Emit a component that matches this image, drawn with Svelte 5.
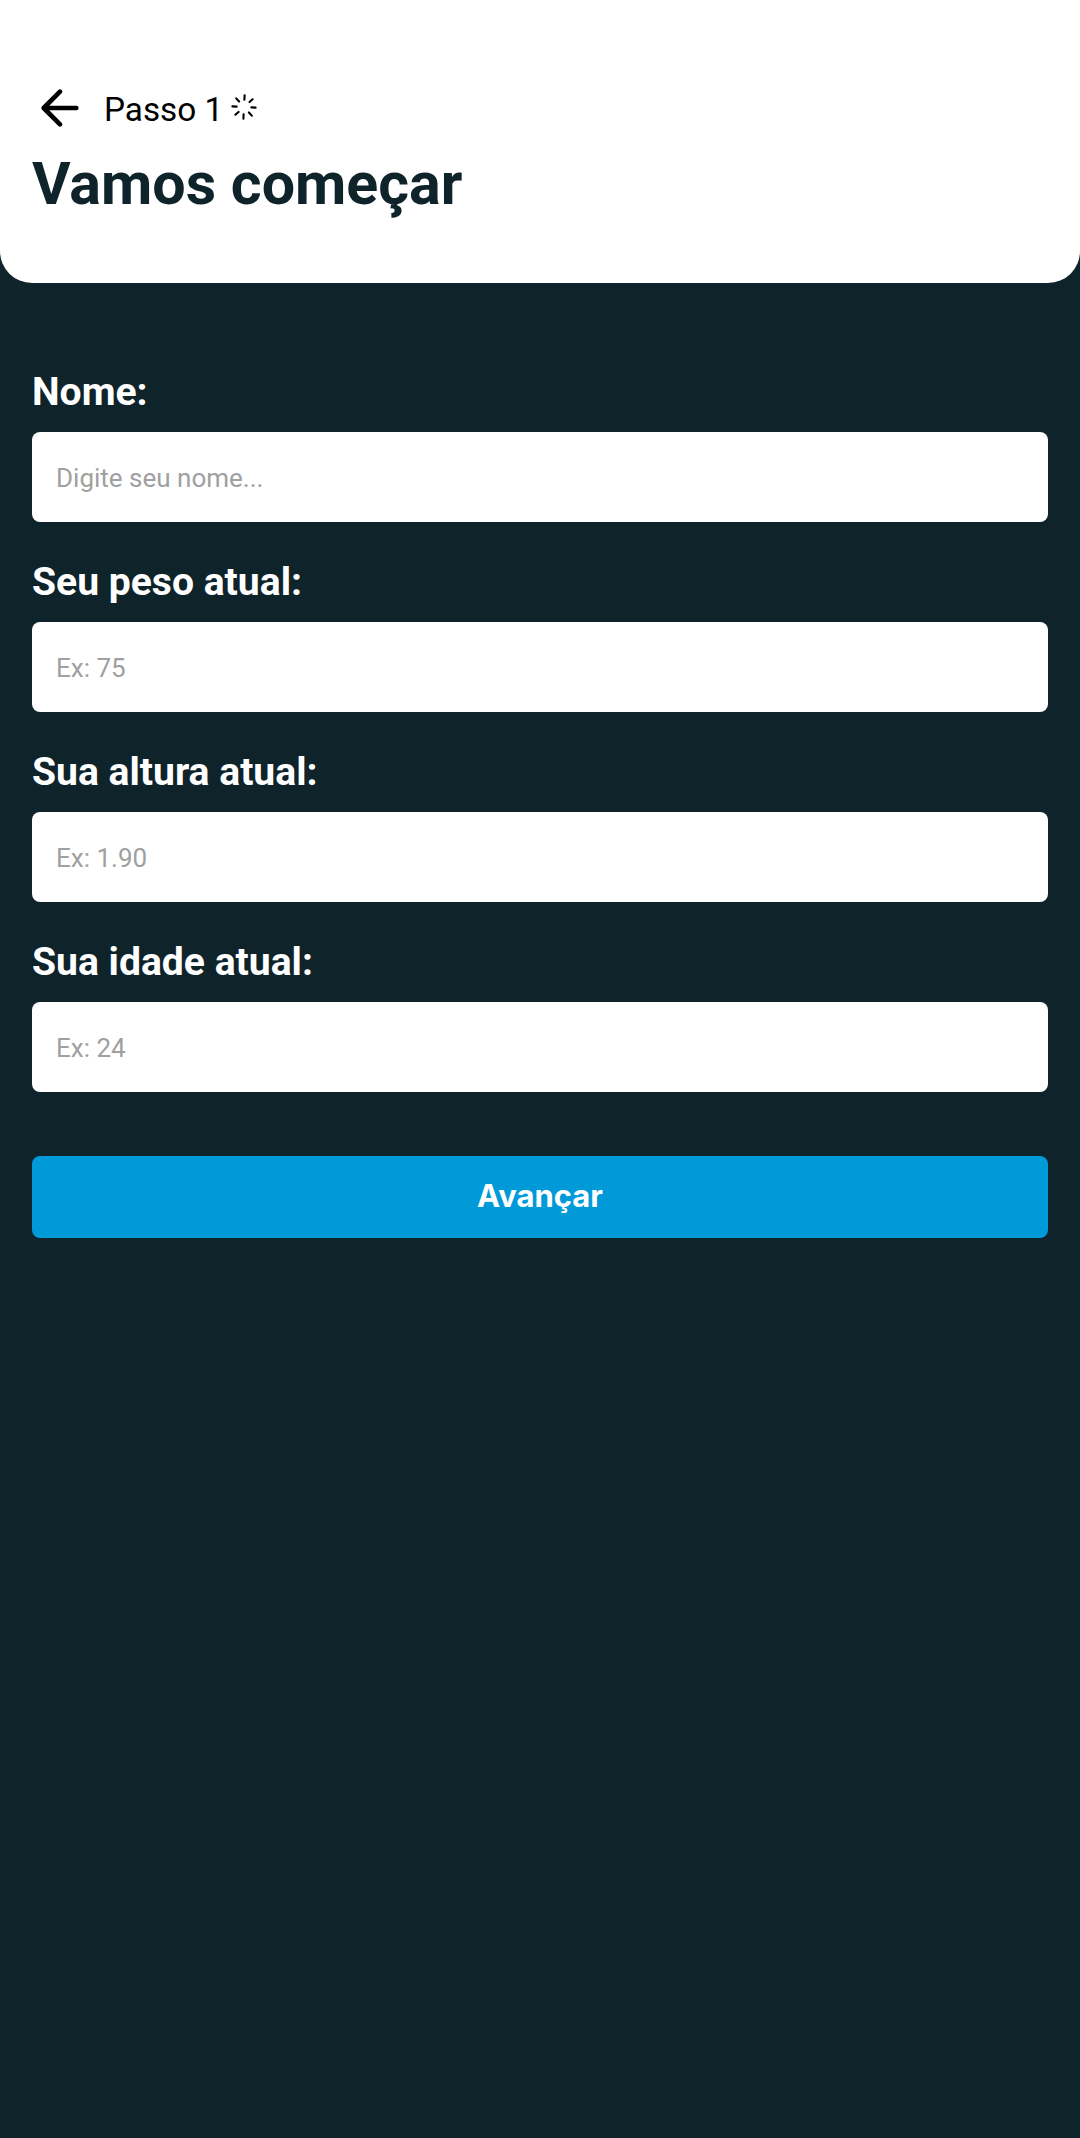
<script>
  const fields = [
    { id: 'nome', label: 'Nome:', placeholder: 'Digite seu nome...' },
    { id: 'peso', label: 'Seu peso atual:', placeholder: 'Ex: 75' },
    { id: 'altura', label: 'Sua altura atual:', placeholder: 'Ex: 1.90' },
    { id: 'idade', label: 'Sua idade atual:', placeholder: 'Ex: 24' }
  ];
</script>

<div class="screen">
  <header>
    <div class="step">
      <button class="back" aria-label="Voltar">
        <svg width="56" height="56" viewBox="0 0 24 24">
          <path d="M19 12H5M12 19l-7-7 7-7" stroke-width="2" />
        </svg>
      </button>
      <span>Passo 1</span>
      <svg class="loader" width="28" height="28" viewBox="0 0 28 28">
        <path
          transform="rotate(3 14 14)"
          d="M14 2.4v4.2M14 21.4v4.2M2.4 14h4.2M21.4 14h4.2M5.8 5.8l3 3M19.2 19.2l3 3M5.8 22.2l3-3M19.2 8.8l3-3"
          stroke-width="2.1"
        />
      </svg>
    </div>
    <h1>Vamos começar</h1>
  </header>

  <form>
    {#each fields as field}
      <div class="field">
        <label for={field.id}>{field.label}</label>
        <input id={field.id} placeholder={field.placeholder} />
      </div>
    {/each}
    <button class="next" type="button">Avançar</button>
  </form>
</div>

<style>
  :global(body) {
    background: #0f232b;
  }
  .screen {
    box-sizing: border-box;
    min-height: 2138px;
    background: #0f232b;
    font-family: Roboto, sans-serif;
  }
  header {
    box-sizing: border-box;
    height: 283px;
    padding: 80px 32px 0;
    background: #fff;
    border-radius: 0 0 32px 32px;
  }
  .step {
    display: flex;
    align-items: center;
    height: 56px;
    color: #000;
    font-size: 33.3px;
    font-weight: 400;
    line-height: 56px;
  }
  .step span {
    padding-top: 4px;
  }
  svg {
    display: block;
    fill: none;
    stroke: #000;
    stroke-linecap: round;
    stroke-linejoin: round;
  }
  .back {
    margin: 0 16px 0 0;
    padding: 0;
    border: 0;
    background: none;
  }
  .loader {
    margin: 0 0 3px 7px;
  }
  h1 {
    margin: 12px 0 0;
    color: #0f232b;
    font-size: 59.2px;
    font-weight: 700;
    line-height: 72px;
  }
  form {
    display: flex;
    flex-direction: column;
    gap: 36px;
    padding: 85px 32px 0;
  }
  .field {
    display: flex;
    flex-direction: column;
    gap: 16px;
  }
  label {
    color: #fff;
    font-size: 39.1px;
    font-weight: 700;
    line-height: 48px;
  }
  input {
    box-sizing: border-box;
    width: 100%;
    height: 90px;
    padding: 2px 24px 0;
    border: 0;
    border-radius: 8px;
    background: #fff;
    font: 400 26px Roboto, sans-serif;
  }
  input::placeholder {
    color: #a0a0a0;
    opacity: 1;
  }
  .next {
    height: 82px;
    margin-top: 28px;
    padding: 0 0 3px;
    border: 0;
    border-radius: 8px;
    background: #019ad8;
    color: #fff;
    font: 700 31px Inter, sans-serif;
  }
</style>
